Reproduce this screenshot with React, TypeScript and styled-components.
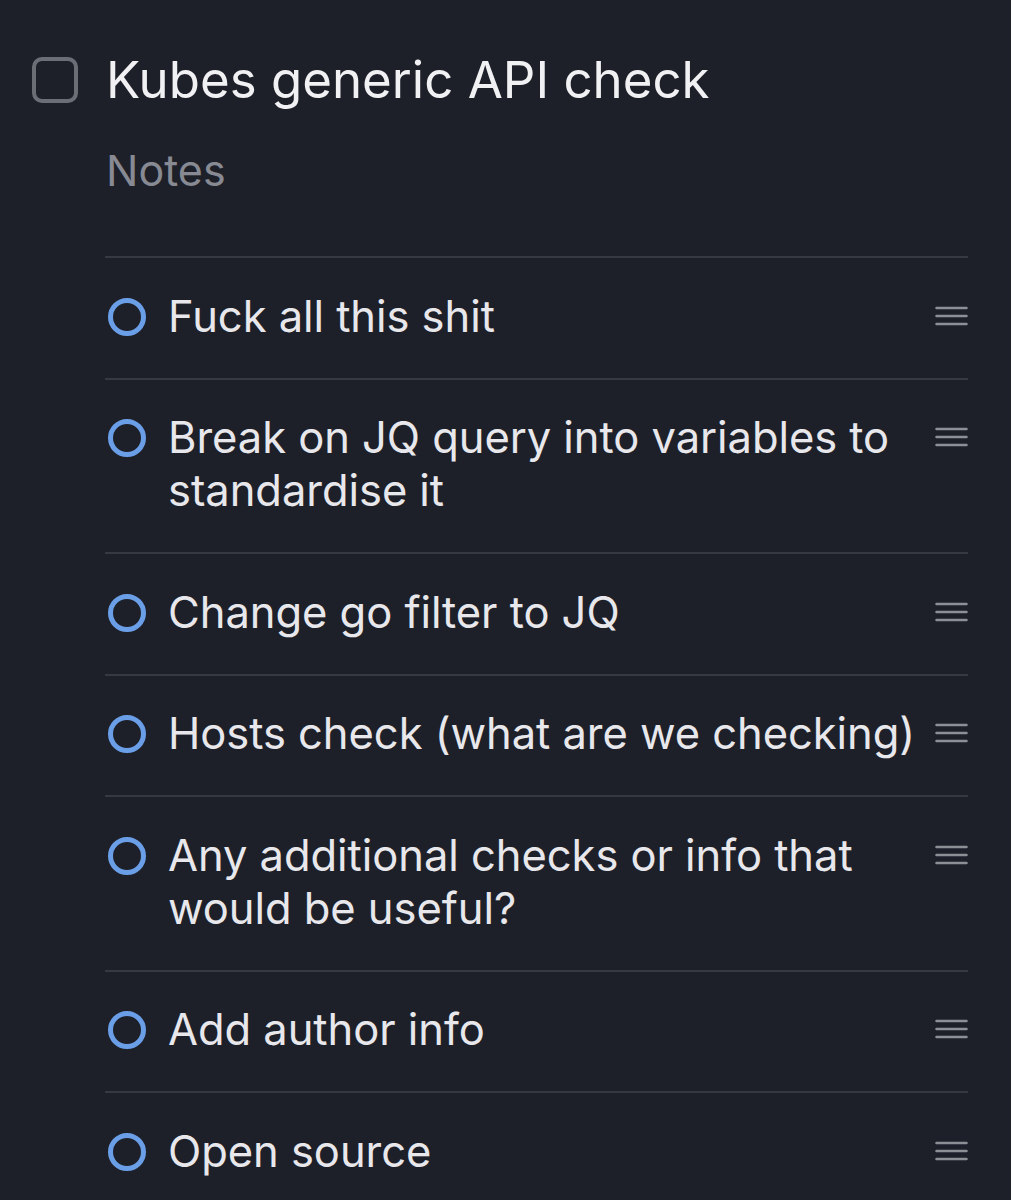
import React from "react";
import styled, { createGlobalStyle } from "styled-components";

const Global = createGlobalStyle`
  html, body { margin: 0; padding: 0; background: #1e2029; }
  body { font-family: Inter, "Noto Sans", sans-serif; -webkit-font-smoothing: antialiased; }
`;

const Page = styled.div`
  width: 1011px;
  min-height: 1200px;
  background: #1e2029;
  box-sizing: border-box;
  padding: 50px 43px 0 32px;
  overflow: hidden;
`;

const Header = styled.div`
  display: flex;
  align-items: center;
  gap: 28px;
`;

const Checkbox = styled.div`
  width: 46px;
  height: 46px;
  box-sizing: border-box;
  border: 4px solid #6c6e75;
  border-radius: 10px;
  flex: none;
`;

const Title = styled.h1`
  margin: 0;
  font-size: 51px;
  line-height: 60px;
  font-weight: 400;
  color: #f1f1f4;
  letter-spacing: 0;
`;

const Notes = styled.div`
  margin: 33px 0 0 74px;
  font-size: 43px;
  line-height: 54px;
  color: #878a93;
`;

const List = styled.ul`
  list-style: none;
  margin: 59px 0 0 73px;
  padding: 0;
  border-top: 2px solid #363842;
`;

const Row = styled.li`
  display: flex;
  align-items: flex-start;
  padding: 31.5px 0 35px 3px;
  border-bottom: 2px solid #363842;
`;

const Circle = styled.span`
  flex: none;
  width: 38px;
  height: 38px;
  box-sizing: border-box;
  border: 5px solid #6a9fe8;
  border-radius: 50%;
  margin: 8px 22px 0 0;
`;

const Text = styled.span`
  flex: 1;
  min-width: 0;
  font-size: 43.5px;
  line-height: 53px;
  color: #e8e8ec;
  letter-spacing: -0.05px;
`;

const Handle = styled.svg`
  flex: none;
  width: 33px;
  height: 22px;
  margin: 15px 0 0 12px;
  display: block;
`;

const items = [
  "Fuck all this shit",
  "Break on JQ query into variables to standardise it",
  "Change go filter to JQ",
  "Hosts check (what are we checking)",
  "Any additional checks or info that would be useful?",
  "Add author info",
  "Open source",
];

export default function App() {
  return (
    <Page>
      <Global />
      <Header>
        <Checkbox />
        <Title>Kubes generic API check</Title>
      </Header>
      <Notes>Notes</Notes>
      <List>
        {items.map((t) => (
          <Row key={t}>
            <Circle />
            <Text>{t}</Text>
            <Handle viewBox="0 0 33 22">
              <g stroke="#8d8f97" strokeWidth="2.5" strokeLinecap="round">
                <line x1="1.5" y1="3" x2="31.5" y2="3" />
                <line x1="1.5" y1="11" x2="31.5" y2="11" />
                <line x1="1.5" y1="19" x2="31.5" y2="19" />
              </g>
            </Handle>
          </Row>
        ))}
      </List>
    </Page>
  );
}
